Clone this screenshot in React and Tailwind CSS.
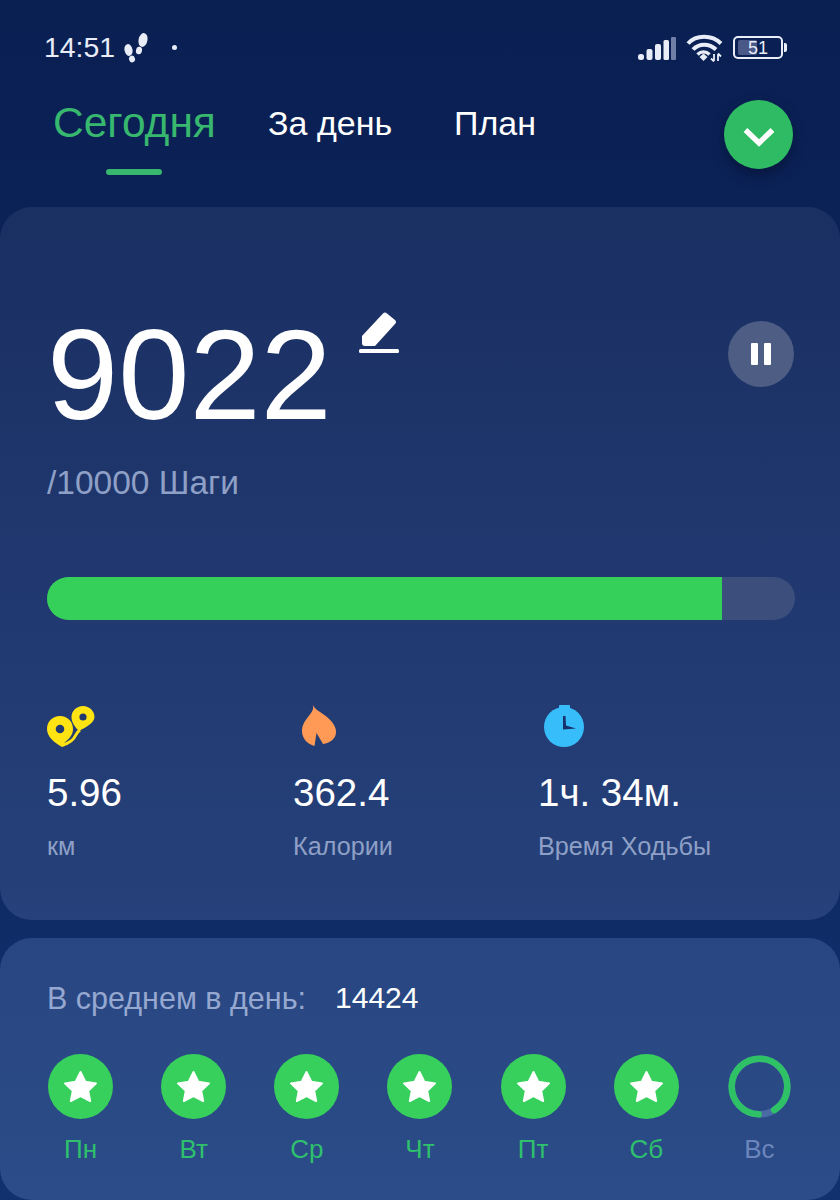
const days = [
  { label: 'Пн', done: true },
  { label: 'Вт', done: true },
  { label: 'Ср', done: true },
  { label: 'Чт', done: true },
  { label: 'Пт', done: true },
  { label: 'Сб', done: true },
  { label: 'Вс', done: false },
]

function Steps() {
  return (
    <svg width="24" height="30" viewBox="0 0 24 30" fill="#e8edf8" className="block">
      <ellipse cx="4.5" cy="17" rx="4" ry="6" transform="rotate(-12 4.5 17)" />
      <ellipse cx="8" cy="26" rx="3" ry="3.4" transform="rotate(-15 8 26)" />
      <ellipse cx="19" cy="7" rx="4.4" ry="7" transform="rotate(12 19 7)" />
      <ellipse cx="15" cy="17.5" rx="3" ry="3.8" transform="rotate(12 15 17.5)" />
    </svg>
  )
}

function Signal() {
  return (
    <svg width="38" height="24" viewBox="0 0 38 24" className="block">
      <rect x="0" y="18" width="6" height="6" rx="2.5" fill="#e8edf8" />
      <rect x="8.5" y="13" width="6" height="11" rx="2" fill="#e8edf8" />
      <rect x="17" y="8" width="6" height="16" rx="2" fill="#e8edf8" />
      <rect x="25.5" y="4" width="5.5" height="20" rx="1.5" fill="#e8edf8" />
      <rect x="33" y="1" width="5" height="23" rx="1" fill="#6f7fa6" />
    </svg>
  )
}

function Wifi() {
  return (
    <svg width="37" height="28" viewBox="0 0 37 28" fill="none" stroke="#e8edf8" strokeWidth="4" className="block">
      <path d="M2 9.5 C10 0.5 26 0.5 35 9.5" />
      <path d="M7 15.5 C13 9 23 9 30 15.5" />
      <path d="M11.5 20.5 C15 17 20 17 23.5 20.5" strokeWidth="3.4" />
      <path d="M13.5 23 L17.5 19.5 L21.5 23 L17.5 27 Z" fill="#e8edf8" stroke="none" />
      <path d="M28 20 V27 M25 24.5 L28 27.5" strokeWidth="1.8" />
      <path d="M32 20 V27 M35 22.5 L32 19.5" strokeWidth="1.8" />
    </svg>
  )
}

function Battery() {
  return (
    <div className="flex items-center gap-[1px]">
      <div className="relative flex h-[23px] w-[50px] items-center overflow-hidden rounded-[5px] border-2 border-[#e8edf8] pl-[3px]">
        <div className="h-[15px] w-[19px] rounded-[2px] bg-[#4a5888]" />
        <span className="absolute left-[13px] text-[18px] leading-none text-[#e8edf8]">51</span>
      </div>
      <div className="h-[9px] w-[3px] rounded-r-[2px] bg-[#e8edf8]" />
    </div>
  )
}

function Pencil() {
  return (
    <svg width="40" height="44" viewBox="0 0 40 44" className="block">
      <path d="M3 25 L24 2.5 Q26 0.5 28 2.5 L36 9 Q38 11 36 13 L16 35 H6 Q3 35 3 32 Z" fill="#fff" />
      <rect x="0" y="38" width="40" height="4" rx="1.5" fill="#fff" />
    </svg>
  )
}

function RouteIcon() {
  return (
    <svg width="48" height="42" viewBox="0 0 48 42" className="block">
      <path d="M13 10 C5.5 10 0 15.5 0 23 C0 30 6 36 15 41 C19 40 22 38 24 35 C20 36 19 36.5 17 37 C22 33 26 29 26 23 C26 15.5 20.5 10 13 10 Z" fill="#ffe312" />
      <path d="M36 0 C29.5 0 24.5 5 24.5 11 C24.5 16.5 28 21 32 25 C37 22 47.5 17.5 47.5 11 C47.5 5 42.5 0 36 0 Z" fill="#ffe312" />
      <path d="M33 24 C27 28 30 31 24 35 L19 38" fill="none" stroke="#ffe312" strokeWidth="3" />
      <circle cx="13" cy="23" r="4.3" fill="#22396f" />
      <circle cx="36" cy="11" r="3.6" fill="#22396f" />
    </svg>
  )
}

function Flame() {
  return (
    <svg width="34" height="41" viewBox="0 0 34 41" className="mb-[2px] block">
      <path d="M11 0 C13 5 19 7 25 12 C31 17 34 22 34 27 C34 34 28 38 21 39 L14.5 28 L12.5 41 C5 39 0 33 0 26 C0 20 3 16 6 12 C9 8 12 5 11 0 Z" fill="#ff9a56" />
    </svg>
  )
}

function Timer() {
  return (
    <svg width="42" height="42" viewBox="0 0 42 42" className="mb-[1px] block">
      <rect x="16" y="0" width="11" height="6" rx="1" fill="#38bdfb" />
      <circle cx="21" cy="22" r="20" fill="#38bdfb" />
      <path d="M20 11 L22.5 11 L23 20.5 L33 23.5 L20 24.5 Z" fill="#16316b" />
    </svg>
  )
}

function Chevron() {
  return (
    <svg width="32" height="21" viewBox="0 0 32 21" className="mt-[5px] block">
      <path d="M2.5 3 L16 16 L29.5 3" fill="none" stroke="#fff" strokeWidth="5.4" />
    </svg>
  )
}

function Stat({ icon, value, label, className }) {
  return (
    <div className={className}>
      <div className="flex h-[44px] items-end">{icon}</div>
      <div className="mt-[23px] text-[38.5px] leading-[44px] text-white">{value}</div>
      <div className="mt-[16px] text-[25.2px] leading-[30px] text-[#8fa0c6]">{label}</div>
    </div>
  )
}

function DayMark({ done }) {
  if (!done) {
    return (
      <svg width="65" height="65" viewBox="0 0 65 65" className="block">
        <circle cx="32.5" cy="32.5" r="27.8" fill="none" stroke="#4a6aa6" strokeWidth="6.6" />
        <circle cx="32.5" cy="32.5" r="27.8" fill="none" stroke="#2fc165" strokeWidth="6.6" strokeLinecap="round" strokeDasharray="158 175" transform="rotate(92 32.5 32.5)" />
      </svg>
    )
  }
  return (
    <div className="flex h-[65px] w-[65px] items-center justify-center rounded-full bg-[#37d05c]">
      <svg width="35" height="33" viewBox="0 0 36 34" className="block">
        <path d="M18 2 L23 12 L34 13.8 L26 21.5 L28 32 L18 27 L8 32 L10 21.5 L2 13.8 L13 12 Z" fill="#fff" stroke="#fff" strokeWidth="2" strokeLinejoin="round" />
      </svg>
    </div>
  )
}

export default function App() {
  return (
    <div className="h-[1200px] w-[840px] overflow-hidden bg-gradient-to-b from-[#0a1f52] to-[#11306e] font-['Liberation_Sans',sans-serif]">
      <div className="flex h-[93px] items-center justify-between pl-[44px] pr-[53px] pt-[2px]">
        <div className="flex items-center">
          <span className="text-[28.4px] leading-none text-[#e8edf8]">14:51</span>
          <span className="ml-[9px]"><Steps /></span>
          <span className="ml-[24px] h-[5px] w-[5px] rounded-full bg-[#e8edf8]" />
        </div>
        <div className="flex items-center gap-[10px]">
          <Signal />
          <Wifi />
          <Battery />
        </div>
      </div>

      <div className="relative flex h-[114px] items-start pl-[53px]">
        <div className="flex w-[215px] flex-col">
          <span className="text-[42.5px] leading-[60px] text-[#38b76f]">Сегодня</span>
          <span className="ml-[53px] mt-[16px] h-[6px] w-[56px] rounded-full bg-[#38b76f]" />
        </div>
        <span className="w-[186px] text-[34px] leading-[60px] text-white">За день</span>
        <span className="text-[34px] leading-[60px] text-white">План</span>
        <button className="absolute right-[47px] top-[7px] flex h-[69px] w-[69px] items-center justify-center rounded-full bg-[#2fbb63] shadow-[0_6px_12px_rgba(3,12,40,0.5)]">
          <Chevron />
        </button>
      </div>

      <div className="h-[713px] rounded-[32px] bg-gradient-to-b from-[#1a2f62] to-[#26417b] pl-[47px] pr-[46px] pt-[95px]">
        <div className="flex items-start justify-between">
          <div>
            <div className="flex items-start">
              <span className="text-[128px] leading-[146px] text-white">9022</span>
              <span className="ml-[27px] mt-[9px]"><Pencil /></span>
            </div>
            <div className="mt-[16px] text-[33.5px] leading-[38px] text-[#8fa0c6]">/10000 Шаги</div>
          </div>
          <div className="mt-[19px] flex h-[66px] w-[66px] items-center justify-center gap-[6px] rounded-full bg-[#4d5d84]">
            <span className="h-[22px] w-[7px] rounded-[1px] bg-white" />
            <span className="h-[22px] w-[7px] rounded-[1px] bg-white" />
          </div>
        </div>

        <div className="mt-[75px] h-[43px] w-[748px] overflow-hidden rounded-[22px] bg-[#3c4e7c]">
          <div className="h-full w-[675px] bg-[#35d05a]" />
        </div>

        <div className="mt-[84px] flex">
          <Stat className="w-[246px]" value="5.96" label="км" icon={<RouteIcon />} />
          <Stat className="w-[245px]" value="362.4" label="Калории" icon={<span className="ml-[9px]"><Flame /></span>} />
          <Stat value="1ч. 34м." label="Время Ходьбы" icon={<span className="ml-[5px]"><Timer /></span>} />
        </div>
      </div>

      <div className="mt-[18px] h-[262px] rounded-[32px] bg-gradient-to-b from-[#284682] to-[#2b4c88] pt-[42px]">
        <div className="flex items-center pl-[47px]">
          <span className="text-[30.5px] leading-[36px] text-[#96a8d0]">В среднем в день:</span>
          <span className="ml-[29px] text-[30px] leading-[36px] text-white">14424</span>
        </div>
        <div className="mt-[38px] grid grid-cols-7 px-[24px]">
          {days.map(d => (
            <div key={d.label} className="flex flex-col items-center">
              <DayMark done={d.done} />
              <span className={d.done ? 'mt-[14px] text-[26px] leading-[32px] text-[#2fc06d]' : 'mt-[14px] text-[26px] leading-[32px] text-[#6c86bd]'}>{d.label}</span>
            </div>
          ))}
        </div>
      </div>
    </div>
  )
}
